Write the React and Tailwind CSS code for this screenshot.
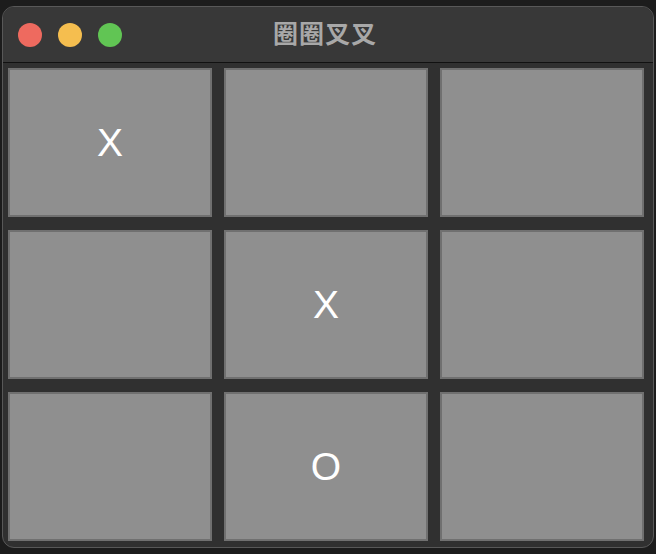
import React from 'react';

const board = ['X', '', '', '', 'X', '', '', 'O', ''];

export default function App() {
  return (
    <div className="w-[656px] h-[554px] bg-[#1c1c1c] pt-[6px] px-[2px]">
      <div className="h-[542px] rounded-[12px] border border-[#585858] bg-[#303030] overflow-hidden flex flex-col">
        {/* title bar */}
        <div className="relative h-[56px] shrink-0 bg-[#383838] border-b border-[#111] flex items-center">
          <div className="flex items-center gap-[16px] pl-[15px]">
            <div className="w-[24px] h-[24px] rounded-full bg-[#ee6a5f]"></div>
            <div className="w-[24px] h-[24px] rounded-full bg-[#f5be4f]"></div>
            <div className="w-[24px] h-[24px] rounded-full bg-[#61c554]"></div>
          </div>
          <div
            className="absolute inset-0 flex items-center justify-center pr-[6px] pb-[3px] text-[25px] font-bold text-[#a8a8a8] tracking-[1px]"
            style={{ fontFamily: '"Noto Sans CJK SC", "Noto Sans", sans-serif' }}
          >
            圈圈叉叉
          </div>
        </div>

        {/* board */}
        <div className="grid grid-cols-[204px_204px_204px] grid-rows-[149px_149px_149px] gap-x-[12px] gap-y-[13px] pl-[5px] pt-[5px]">
          {board.map((v, i) => (
            <div
              key={i}
              className="border-2 border-[#707070] bg-[#8f8f8f] flex items-center justify-center pt-[2px] text-white text-[39px]"
              style={{ fontFamily: '"Liberation Sans", Arial, sans-serif' }}
            >
              {v}
            </div>
          ))}
        </div>
      </div>
    </div>
  );
}
